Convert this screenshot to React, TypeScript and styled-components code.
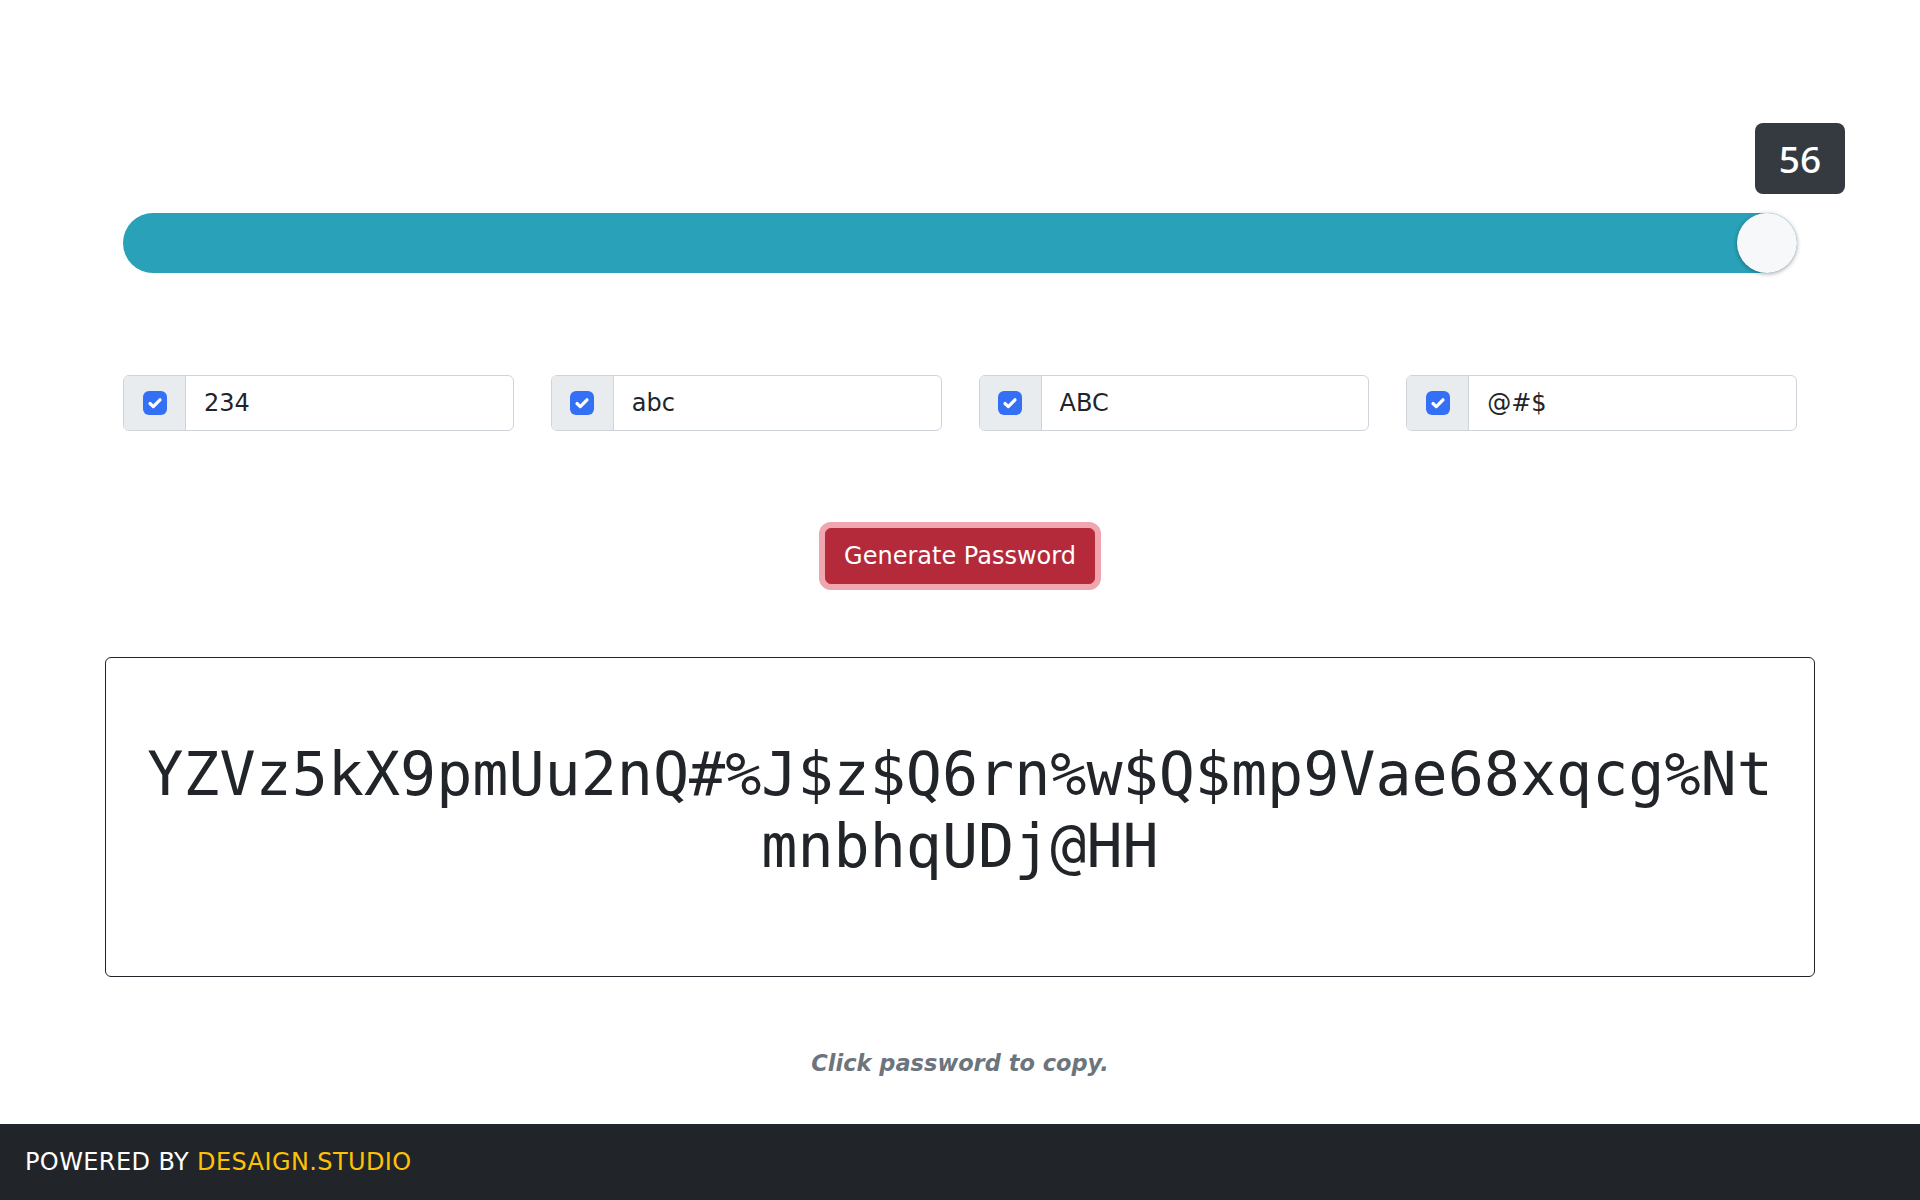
import React from "react";
import styled, { createGlobalStyle } from "styled-components";

const GlobalStyle = createGlobalStyle`
  html, body { margin: 0; padding: 0; background: #ffffff; }
  body {
    font-family: "DejaVu Sans", "Noto Sans", sans-serif;
    font-size: 24px;
    line-height: 1.5;
    color: #212529;
  }
  * { box-sizing: border-box; }
`;

const Page = styled.div`
  min-height: 100vh;
  display: flex;
  flex-direction: column;
`;

const Main = styled.main`
  flex: 1;
  padding: 123px 105px 0;
  display: flex;
  flex-direction: column;
`;

const Controls = styled.section`
  padding: 0 18px;
  display: flex;
  flex-direction: column;
`;

const SliderWrap = styled.div`
  position: relative;
  padding-top: 90px;
`;

const ValueBadge = styled.div`
  position: absolute;
  top: 0;
  right: -48px;
  width: 90px;
  height: 71px;
  border-radius: 8px;
  background: #343a40;
  color: #ffffff;
  font-family: "Noto Sans", "Open Sans", sans-serif;
  font-weight: 500;
  font-size: 37px;
  display: flex;
  align-items: center;
  justify-content: center;
`;

const Track = styled.div`
  height: 60px;
  border-radius: 30px;
  background: #29a1b8;
  display: flex;
  justify-content: flex-end;
`;

const Thumb = styled.div`
  width: 60px;
  height: 60px;
  border-radius: 50%;
  background: #f7f8fa;
  box-shadow: 0 1px 4px rgba(0, 0, 0, 0.35);
`;

const Options = styled.div`
  margin-top: 102px;
  display: grid;
  grid-template-columns: repeat(4, 1fr);
  gap: 37px;
`;

const InputGroup = styled.label`
  display: flex;
  height: 56px;
  border: 1px solid #ced4da;
  border-radius: 6px;
  overflow: hidden;
  background: #ffffff;
`;

const Addon = styled.span`
  width: 62px;
  flex: none;
  display: flex;
  align-items: center;
  justify-content: center;
  background: #e9ecef;
  border-right: 1px solid #ced4da;
`;

const CheckBox = styled.span<{ $checked: boolean }>`
  width: 24px;
  height: 24px;
  border-radius: 6px;
  background: ${(p) => (p.$checked ? "#3470f6" : "#ffffff")};
  display: flex;
  align-items: center;
  justify-content: center;
`;

const OptionText = styled.span`
  padding: 0 18px;
  display: flex;
  align-items: center;
  font-size: 24px;
  color: #212529;
`;

const ButtonRow = styled.div`
  margin-top: 97px;
  display: flex;
  justify-content: center;
`;

const GenerateButton = styled.button`
  height: 56px;
  padding: 0 18px;
  border: 1px solid #b52a3b;
  border-radius: 6px;
  background: #b52a3b;
  color: #ffffff;
  font-family: "DejaVu Sans", sans-serif;
  font-size: 24px;
  box-shadow: 0 0 0 6px #efa6ae;
  cursor: pointer;
`;

const PasswordBox = styled.div`
  margin-top: 73px;
  border: 1px solid #212529;
  border-radius: 6px;
  padding: 80px 30px 94px;
  text-align: center;
  font-family: "DejaVu Sans Mono", monospace;
  font-size: 60px;
  line-height: 72px;
  color: #212529;
  word-break: break-all;
  cursor: pointer;
`;

const Hint = styled.p`
  margin: 68px 0 43px;
  text-align: center;
  font-style: italic;
  font-weight: bold;
  font-size: 22.5px;
  line-height: 36px;
  color: #6c757d;
`;

const Footer = styled.footer`
  height: 76px;
  background: #212529;
  display: flex;
  align-items: center;
  padding-left: 25px;
  color: #ffffff;
  font-size: 24px;
  letter-spacing: 0.4px;
`;

const Brand = styled.span`
  color: #ffc107;
`;

const Check = () => (
  <svg width="20" height="20" viewBox="0 0 20 20" fill="none">
    <path d="M5 10.5l3.3 3.1L15 6.8" stroke="#fff" strokeWidth="3.2" strokeLinecap="round" strokeLinejoin="round" />
  </svg>
);

const options = ["234", "abc", "ABC", "@#$"];

export default function App() {
  return (
    <Page>
      <GlobalStyle />
      <Main>
        <Controls>
          <SliderWrap>
            <ValueBadge>56</ValueBadge>
            <Track>
              <Thumb />
            </Track>
          </SliderWrap>
          <Options>
            {options.map((o) => (
              <InputGroup key={o}>
                <Addon>
                  <CheckBox $checked>
                    <Check />
                  </CheckBox>
                </Addon>
                <OptionText>{o}</OptionText>
              </InputGroup>
            ))}
          </Options>
          <ButtonRow>
            <GenerateButton>Generate Password</GenerateButton>
          </ButtonRow>
        </Controls>
        <PasswordBox>YZVz5kX9pmUu2nQ#%J$z$Q6rn%w$Q$mp9Vae68xqcg%NtmnbhqUDj@HH</PasswordBox>
        <Hint>Click password to copy.</Hint>
      </Main>
      <Footer>
        POWERED BY&nbsp;<Brand>DESAIGN.STUDIO</Brand>
      </Footer>
    </Page>
  );
}
